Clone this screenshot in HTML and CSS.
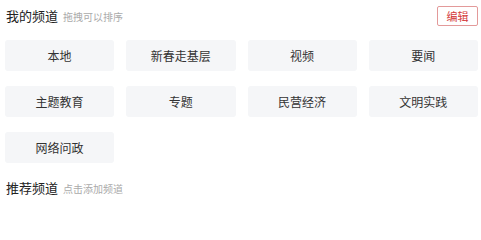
FILE: index.html
```html
<!DOCTYPE html>
<html lang="zh">
<head>
<meta charset="utf-8">
<link rel="stylesheet" href="styles.css">
</head>
<body>
<div class="page">
  <div class="head">
    <div class="title-wrap">
      <span class="title">我的频道</span>
      <span class="sub">拖拽可以排序</span>
    </div>
    <button class="edit">编辑</button>
  </div>
  <div class="grid">
    <div class="tile">本地</div>
    <div class="tile">新春走基层</div>
    <div class="tile">视频</div>
    <div class="tile">要闻</div>
    <div class="tile">主题教育</div>
    <div class="tile">专题</div>
    <div class="tile">民营经济</div>
    <div class="tile">文明实践</div>
    <div class="tile">网络问政</div>
  </div>
  <div class="head2">
    <span class="title">推荐频道</span>
    <span class="sub">点击添加频道</span>
  </div>
</div>
</body>
</html>
```

FILE: styles.css
```css
* { box-sizing: border-box; }
html, body { margin: 0; padding: 0; background: #fff; }
body {
  font-family: "Noto Sans CJK SC", "Noto Sans", sans-serif;
  color: #333;
}
.page { padding: 6px 3px 0 5px; }
.head {
  display: flex;
  align-items: center;
  justify-content: space-between;
  height: 20px;
}
.title-wrap { display: flex; align-items: baseline; }
.title {
  font-size: 13px;
  color: #222;
  line-height: 20px;
  padding-left: 1px;
}
.sub {
  font-size: 10px;
  color: #aaa;
  margin-left: 5px;
  line-height: 20px;
}
.edit {
  height: 20px;
  width: 41px;
  padding: 0;
  border: 1px solid #e39a9a;
  border-radius: 2px;
  background: #fff;
  color: #d43c3c;
  font-family: inherit;
  font-size: 11px;
  line-height: 18px;
}
.grid {
  display: grid;
  grid-template-columns: repeat(4, 1fr);
  column-gap: 12px;
  row-gap: 15px;
  margin-top: 14px;
}
.tile {
  height: 31px;
  background: #f5f6f8;
  border-radius: 3px;
  display: flex;
  align-items: center;
  justify-content: center;
  font-size: 12px;
  color: #333;
}
.head2 {
  display: flex;
  align-items: baseline;
  margin-top: 15px;
}
```
